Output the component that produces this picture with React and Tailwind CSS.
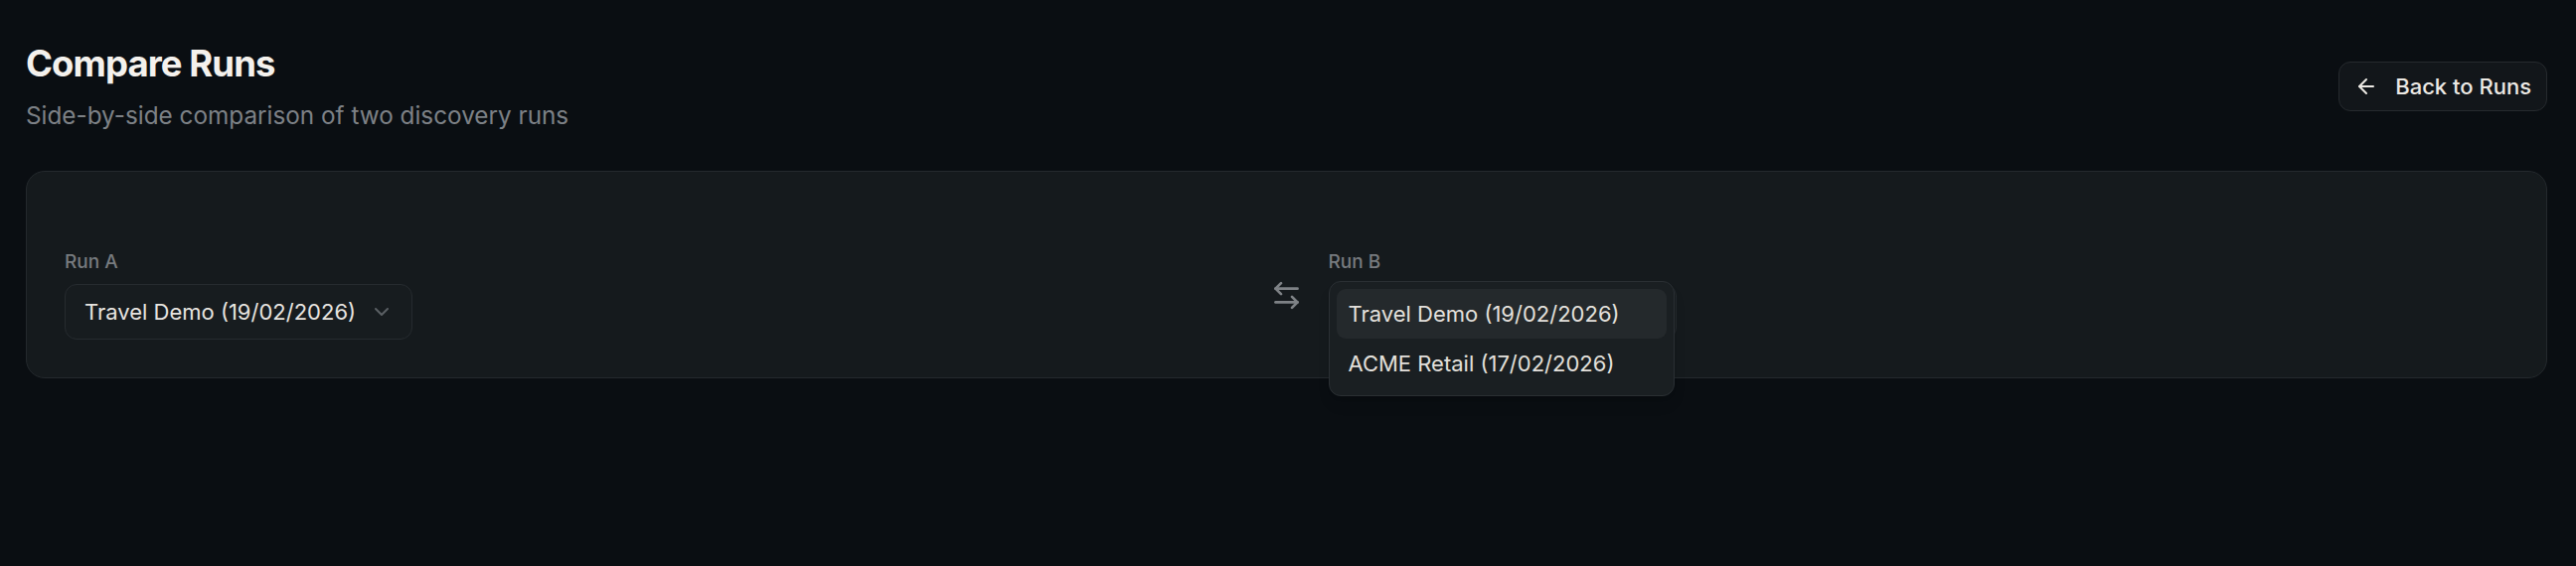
import React from 'react';
import { ArrowLeft, ArrowLeftRight, ChevronDown } from 'lucide-react';

const RUNS = [
    { id: 'travel', label: 'Travel Demo (19/02/2026)' },
    { id: 'acme', label: 'ACME Retail (17/02/2026)' }
];

const SelectTrigger = ({ value }) => (
    <button className="flex h-[56px] items-center gap-[14px] rounded-[12px] border border-[#262b2f] bg-[#171c1f] pl-[19px] pr-[18px] text-[22px] text-[#e7e4e0]">
        <span>{value}</span>
        <ChevronDown className="h-[24px] w-[24px] text-[#5b6064]" strokeWidth={2} />
    </button>
);

const RunPicker = ({ label, value, open }) => (
    <div className="flex flex-col items-start">
        <label className="mb-[10px] text-[19px] font-medium leading-[24px] text-[#777b7f]">{label}</label>
        <div className="relative">
            <SelectTrigger value={value} />

            {/* open menu sits over the trigger, selected item lined up with it */}
            {open && (
                <div className="absolute left-0 top-[-3px] z-10 w-[348px] rounded-[12px] border border-[#2a2f33] bg-[#1a1f22] p-[7px] shadow-lg">
                    {RUNS.map((run) => (
                        <div
                            key={run.id}
                            className={`flex h-[50px] items-center rounded-[9px] px-[12px] text-[22px] text-[#e3e0dc] ${
                                run.label === value ? 'bg-[#24292c]' : ''
                            }`}
                        >
                            {run.label}
                        </div>
                    ))}
                </div>
            )}
        </div>
    </div>
);

const App = () => {
    return (
        <div className="min-h-screen bg-[#0a0e12] pl-[26px] pr-[29px] pt-[40px] font-['Inter',sans-serif]">
            {/* Header */}
            <div className="flex items-center justify-between">
                <div>
                    <h1 className="text-[36.5px] font-bold leading-[48px] tracking-tight text-[#f4f1ed]">Compare Runs</h1>
                    <p className="mt-[10px] text-[24.3px] leading-[36px] text-[#7d8186]">
                        Side-by-side comparison of two discovery runs
                    </p>
                </div>
                <button className="flex h-[50px] items-center gap-[17px] rounded-[12px] border border-[#262a2e] bg-[#12161a] px-[15px] text-[22px] font-medium text-[#ece9e4]">
                    <ArrowLeft className="h-[24px] w-[24px]" strokeWidth={2} />
                    Back to Runs
                </button>
            </div>

            {/* Picker card */}
            <div className="mt-[38px] rounded-[19px] border border-[#24292d] bg-[#151a1d] px-[38px] pb-[38px] pt-[79px]">
                <div className="grid grid-cols-[1fr_auto_1fr] items-center gap-[25.5px]">
                    <RunPicker label="Run A" value={RUNS[0].label} />
                    <ArrowLeftRight className="h-[33px] w-[33px] text-[#7e8286]" strokeWidth={2} />
                    <RunPicker label="Run B" value={RUNS[0].label} open />
                </div>
            </div>
        </div>
    );
};

export default App;
